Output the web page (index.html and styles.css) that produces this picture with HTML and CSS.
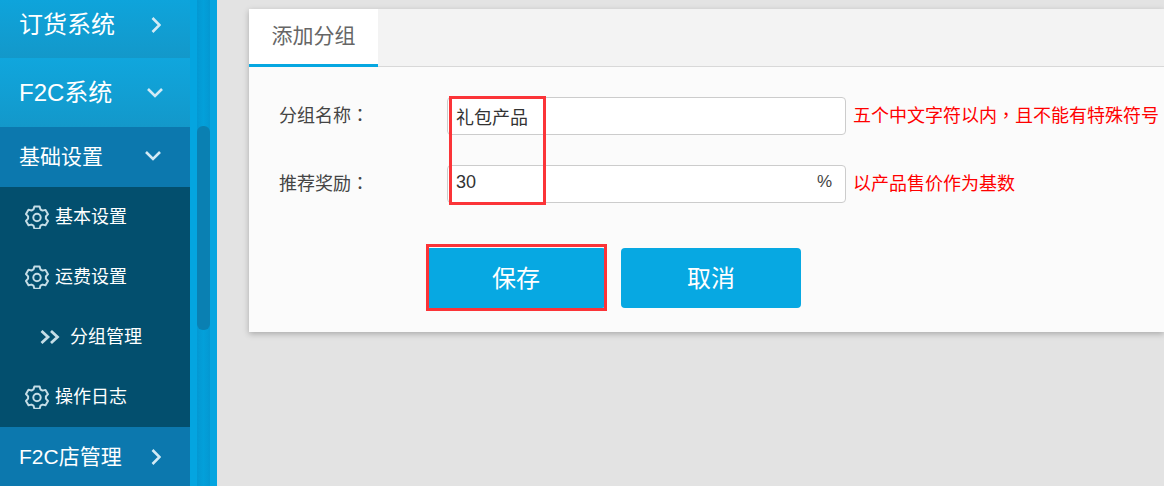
FILE: index.html
```html
<!DOCTYPE html>
<html lang="zh-CN">
<head>
    <meta charset="UTF-8">
    <meta name="viewport" content="width=device-width, initial-scale=1.0">
    <title>添加分组</title>
    <link rel="stylesheet" href="styles.css">
</head>
<body>
    <svg class="defs" width="0" height="0">
        <symbol id="gear" viewBox="0 0 24 24">
            <path d="M9.400 1.500h5.200l.9 3 2 1.100 3-.7 2.500 4.300-2.100 2.300v2.200l2.100 2.300-2.500 4.300-3-.7-2 1.100-.9 3H9.400l-.9-3-2-1.100-3 .7L1 15.900l2.100-2.300v-2.200L1 9.100l2.500-4.300 3 .7 2-1.100z" fill="none" stroke="currentColor" stroke-width="2" stroke-linejoin="round"/>
            <circle cx="12" cy="12.500" r="3.700" fill="none" stroke="currentColor" stroke-width="2"/>
        </symbol>
    </svg>

    <aside class="sidebar">
        <nav class="menu">
            <a class="menu-item first">订货系统
                <svg class="arrow" viewBox="0 0 10 16"><path d="M1.500 1 8.500 8l-7 7"/></svg>
            </a>
            <a class="menu-item tall">F2C系统
                <svg class="arrow down" viewBox="0 0 16 10"><path d="M1 1 8 8l7-7"/></svg>
            </a>
            <a class="menu-item dark small">基础设置
                <svg class="arrow down left" viewBox="0 0 16 10"><path d="M1 1 8 8l7-7"/></svg>
            </a>
            <a class="sub-item"><svg class="gear"><use href="#gear"/></svg>基本设置</a>
            <a class="sub-item"><svg class="gear"><use href="#gear"/></svg>运费设置</a>
            <a class="sub-item child">
                <svg class="double" viewBox="0 0 20 14"><path d="M1.500 1 8 7l-6.500 6M11 1l6.500 6-6.500 6"/></svg>分组管理
            </a>
            <a class="sub-item"><svg class="gear"><use href="#gear"/></svg>操作日志</a>
            <a class="menu-item dark small">F2C店管理
                <svg class="arrow" viewBox="0 0 10 16"><path d="M1.500 1 8.500 8l-7 7"/></svg>
            </a>
        </nav>
        <div class="rail">
            <div class="track"><div class="thumb"></div></div>
        </div>
    </aside>

    <main class="main">
        <section class="panel">
            <div class="tabs">
                <div class="tab">添加分组</div>
            </div>
            <form class="form">
                <div class="row">
                    <label class="label">分组名称<span class="colon" lang="zh-TW">：</span></label>
                    <div class="field"><input type="text" value="礼包产品"></div>
                    <span class="hint">五个中文字符以内<span class="colon" lang="zh-TW">，</span>且不能有特殊符号</span>
                </div>
                <div class="row">
                    <label class="label">推荐奖励<span class="colon" lang="zh-TW">：</span></label>
                    <div class="field num"><input type="text" value="30"><span class="unit">%</span></div>
                    <span class="hint">以产品售价作为基数</span>
                </div>
                <div class="actions">
                    <button type="button" class="btn">保存</button>
                    <button type="button" class="btn">取消</button>
                </div>
            </form>
            <div class="mark mark-fields"></div>
            <div class="mark mark-save"></div>
        </section>
    </main>
</body>
</html>
```

FILE: styles.css
```css
* {
    box-sizing: border-box;
}
html, body {
    height: 100%;
}
body {
    margin: 0;
    display: flex;
    height: 486px;
    overflow: hidden;
    background-color: #e3e3e3;
    font-family: "Liberation Sans", "Noto Sans CJK SC", sans-serif;
}
.defs {
    position: absolute;
}

/* sidebar */
.sidebar {
    display: flex;
    flex: none;
    width: 217px;
    height: 486px;
    background-color: #04a5e0;
}
.menu {
    width: 190px;
    overflow: hidden;
}
.menu-item {
    display: flex;
    align-items: center;
    position: relative;
    height: 69px;
    padding: 0 0 4px 19px;
    color: #ffffff;
    font-size: 24px;
    background: linear-gradient(#10a6dd, #1398ca);
}
.menu-item.first {
    height: 58px;
    padding-bottom: 13px;
    background: linear-gradient(#0ea4db, #1398ca);
}
.menu-item.small {
    height: 60px;
    font-size: 21px;
}
.menu-item.dark {
    background: #0c78ae;
}
.arrow {
    position: absolute;
    left: 151px;
    top: 50%;
    width: 10px;
    height: 16px;
    margin-top: -8px;
    fill: none;
    stroke: #d2eaf5;
    stroke-width: 2.600;
}
.first .arrow {
    margin-top: -12px;
}
.arrow.down {
    left: 147px;
    width: 16px;
    height: 10px;
    margin-top: -5px;
}
.arrow.down.left {
    left: 145px;
    margin-top: -6px;
}
.sub-item {
    display: flex;
    align-items: center;
    height: 60px;
    padding: 0 0 4px 25px;
    background-color: #034f6e;
    color: #ffffff;
    font-size: 18px;
}
.gear {
    flex: none;
    width: 24px;
    height: 24px;
    margin: 4px 6px 0 0;
    color: #c5dde6;
}
.child {
    padding-left: 40px;
}
.double {
    flex: none;
    width: 20px;
    height: 14px;
    margin: 4px 10px 0 0;
    fill: none;
    stroke: #c5dde6;
    stroke-width: 2.800;
}

/* scrollbar */
.rail {
    width: 27px;
    padding: 0 7px;
}
.track {
    height: 100%;
    padding-top: 126px;
    background: linear-gradient(90deg, #0498d2, #03a0da 50%, #0498d2);
}
.thumb {
    height: 204px;
    border-radius: 6px;
    background-color: #0a80b2;
}

/* content */
.main {
    flex: 1;
    min-width: 0;
    padding: 9px 0 0 32px;
}
.panel {
    position: relative;
    height: 323px;
    background-color: #fbfbfb;
    box-shadow: 0 2px 6px rgba(0, 0, 0, 0.25);
}
.tabs {
    height: 58px;
    background-color: #f3f3f3;
    border-bottom: 1px solid #d8d8d8;
}
.tab {
    width: 129px;
    height: 58px;
    padding-top: 11px;
    text-align: center;
    background-color: #ffffff;
    border-bottom: 3px solid #06a7e1;
    color: #666666;
    font-size: 21px;
    line-height: 32px;
}
.form {
    padding: 30px 0 0 30px;
}
.row {
    display: flex;
    align-items: center;
    height: 38px;
    margin-bottom: 30px;
    white-space: nowrap;
}
.label {
    width: 168px;
    padding-bottom: 4px;
    color: #444444;
    font-size: 18px;
}
.colon {
    font-family: "Noto Sans CJK TC", sans-serif;
}
.field {
    display: flex;
    align-items: center;
    width: 399px;
    height: 38px;
    padding: 0 13px 0 8px;
    background-color: #ffffff;
    border: 1px solid #cccccc;
    border-radius: 4px;
}
.field.num {
    padding-bottom: 4px;
}
.field input {
    flex: 1;
    min-width: 0;
    padding: 0;
    border: none;
    outline: none;
    background: none;
    color: #333333;
    font-family: inherit;
    font-size: 18px;
}
.unit {
    color: #444444;
    font-size: 17px;
}
.hint {
    margin-left: 7px;
    padding-bottom: 4px;
    color: #ff0000;
    font-size: 18px;
}
.actions {
    display: flex;
    gap: 15px;
    margin: 45px 0 0 147px;
}
.btn {
    width: 180px;
    height: 60px;
    padding: 0 0 4px;
    border: none;
    border-radius: 4px;
    background-color: #07a8e2;
    color: #ffffff;
    font-family: inherit;
    font-size: 24px;
}

/* red annotation boxes drawn over the form */
.mark {
    position: absolute;
    border: 3px solid #fb3438;
}
.mark-fields {
    left: 200px;
    top: 87px;
    width: 97px;
    height: 109px;
}
.mark-save {
    left: 177px;
    top: 235px;
    width: 181px;
    height: 67px;
}
```
